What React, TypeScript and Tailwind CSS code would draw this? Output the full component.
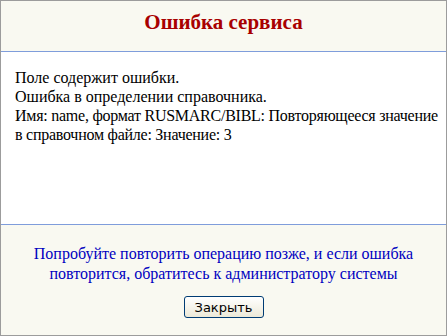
export default function App() {
  return (
    <div className="w-[447px] h-[336px] border border-[#9c9c9c] bg-[#f9f9f1] flex flex-col font-['Liberation_Serif',serif]">
      <div className="h-[51px] shrink-0 border-b border-[#7f9ddb] flex items-start justify-center pt-[8px]">
        <h1 className="text-[21px] font-bold text-[#a80000] leading-[26px]">Ошибка сервиса</h1>
      </div>
      <div className="h-[173px] shrink-0 bg-white border-b border-[#7f9ddb] pl-[14px] pr-0 pt-[16px] text-[16px] leading-[19px] text-black">
        <p>Поле содержит ошибки.</p>
        <p>Ошибка в определении справочника.</p>
        <p className="tracking-[-0.25px]">
          Имя: name, формат RUSMARC/BIBL: Повторяющееся значение в справочном файле: Значение: 3
        </p>
      </div>
      <div className="flex-1 flex flex-col items-center pt-[19px]">
        <p className="text-[16px] leading-[20px] text-[#0000c0] text-center px-4">
          Попробуйте повторить операцию позже, и если ошибка повторится, обратитесь к администратору системы
        </p>
        <button className="mt-[12px] w-[80px] h-[22px] rounded-[3px] border border-[#003c74] bg-gradient-to-b from-white to-[#ece9d8] font-['DejaVu_Sans',sans-serif] text-[13px] text-black leading-none">
          Закрыть
        </button>
      </div>
    </div>
  );
}
